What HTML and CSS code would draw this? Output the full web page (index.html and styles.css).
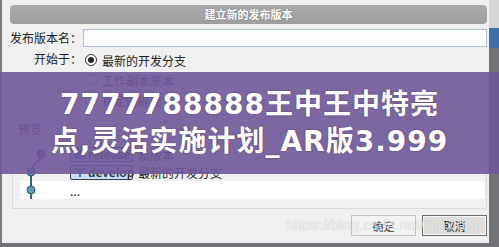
FILE: index.html
```html
<!DOCTYPE html>
<html lang="zh-CN">
<head>
  <meta charset="UTF-8" />
  <meta name="viewport" content="width=device-width, initial-scale=1" />
  <title>建立新的发布版本</title>
  <link rel="stylesheet" href="styles.css">
</head>
<body>

  <div class="dialog">
    <div class="titlebar">建立新的发布版本</div>

    <div class="form">
      <label class="lbl" for="nome">发布版本名：</label>
      <input class="name-input" type="text" id="nome" />

      <span class="lbl">开始于：</span>
      <div class="options">
        <div class="opt"><span class="radio checked"></span>最新的开发分支</div>
        <div class="opt"><span class="radio"></span>工作副本原本</div>
        <div class="opt">
          <span class="radio"></span>指定的提交
          <span class="commit-box"></span>
          <button class="pick">...</button>
        </div>
      </div>
    </div>

    <div class="preview-label">预览</div>
    <div class="group">
      <div class="commits">
        <div class="commit">
          <svg class="lane" width="48" height="18" viewBox="0 0 48 18">
            <path d="M21 9 L21 13 L16 18" stroke="#7b3c9c" stroke-width="2" fill="none" />
            <circle cx="21" cy="9" r="4" fill="#7b3c9c" stroke="#4e2266" stroke-width="1" />
          </svg>
          <span class="tag"><span class="tag-icon"></span>release</span>
          <span class="msg">新版本</span>
        </div>
        <div class="commit">
          <svg class="lane" width="48" height="18" viewBox="0 0 48 18">
            <path d="M16 0 L12 5" stroke="#7b3c9c" stroke-width="2" fill="none" />
            <path d="M11 9 L11 18" stroke="#2a6478" stroke-width="2" fill="none" />
            <circle cx="11" cy="9" r="4" fill="#5a8fc0" stroke="#2c4f70" stroke-width="1" />
          </svg>
          <span class="tag">
            <svg class="tag-icon" width="12" height="10" viewBox="0 0 12 10">
              <path d="M0 1 H12 L7 6 V10 H5 V6 Z" fill="#3b78c8" />
              <path d="M2 3 H10" stroke="#9cc4ee" stroke-width="1" />
            </svg>develop</span>
          <span class="msg">最新的开发分支</span>
        </div>
        <div class="commit white">
          <svg class="lane" width="48" height="18" viewBox="0 0 48 18">
            <path d="M11 0 L11 18" stroke="#2a6478" stroke-width="2" fill="none" />
            <circle cx="11" cy="9" r="4" fill="#5f9fb5" stroke="#2a5a6a" stroke-width="1" />
          </svg>
          <span class="dots">...</span>
        </div>
      </div>
    </div>

    <div class="actions">
      <button class="btn">确定</button>
      <button class="btn default">取消</button>
    </div>
  </div>

  <!-- faixa por cima do dialogo -->
  <div class="banner">
    <div>7777788888王中王中特亮</div>
    <div>点,灵活实施计划_AR版3.999</div>
  </div>

  <div class="watermark">https://blog.csdn.net/Xinxiang</div>

</body>
</html>
```

FILE: styles.css
```css
body {
  margin: 0;
  width: 499px;
  height: 247px;
  overflow: hidden;
  position: relative;
  font-family: "Noto Sans CJK SC", sans-serif;
  font-size: 12px;
  color: #222;
  background: linear-gradient(to bottom, #d6d6d6 0, #d6d6d6 28px, #3d6fa8 28px, #3d6fa8 48px, #707276 48px);
}

.dialog {
  width: 487px;
  height: 243px;
  box-sizing: border-box;
  padding: 5px 2px 0 8px;
  border-left: 2px solid #7d7d7d;
  background-color: #f0f0f0;
  width: 489px;
}

.titlebar {
  height: 19px;
  line-height: 19px;
  border-radius: 4px;
  background: linear-gradient(#ababab, #9e9e9e);
  color: white;
  font-size: 11px;
  font-weight: bold;
  text-align: center;
  text-shadow: 0 0 2px rgba(0,0,0,0.3);
}

.form {
  display: grid;
  grid-template-columns: 72px 1fr;
  column-gap: 1px;
  row-gap: 3px;
  margin-top: 5px;
}
.lbl {
  text-align: right;
  line-height: 18px;
  white-space: nowrap;
}
.form .lbl:nth-of-type(2) {
  line-height: 20px;
}
.name-input {
  height: 18px;
  box-sizing: border-box;
  margin: 0;
  border: 1px solid #a9c0d6;
  background-color: #fbfdff;
}

.opt {
  display: flex;
  align-items: center;
  height: 20px;
  padding-left: 2px;
  white-space: nowrap;
}
.radio {
  width: 12px;
  height: 12px;
  box-sizing: border-box;
  border-radius: 50%;
  border: 1px solid #8a8a8a;
  background-color: white;
  margin-right: 5px;
  position: relative;
}
.radio.checked {
  border-color: #333;
}
.radio.checked::after {
  content: "";
  position: absolute;
  left: 2px;
  top: 2px;
  width: 6px;
  height: 6px;
  border-radius: 50%;
  background-color: #222;
}
.commit-box {
  width: 120px;
  height: 16px;
  margin-left: 84px;
  border: 1px solid #c8c8c8;
  background-color: #f4f4f4;
}
.pick {
  height: 17px;
  width: 34px;
  margin-left: 2px;
  padding: 0;
  font-size: 11px;
  border: 1px solid #b5b5b5;
  background-color: #e8e8e8;
  color: #888;
}

.preview-label {
  margin-top: 12px;
  padding-left: 8px;
  line-height: 14px;
}

.group {
  margin: 1px 0 0 2px;
  height: 72px;
  box-sizing: border-box;
  border: 1px solid #dadada;
  padding: 3px 2px 0 7px;
}
.commits {
  padding-top: 4px;
}
.commit {
  display: flex;
  align-items: center;
  height: 18px;
  white-space: nowrap;
}
.commit.white {
  background-color: white;
}
.lane {
  display: block;
  flex: none;
}
.tag {
  display: flex;
  align-items: center;
  height: 15px;
  width: 63px;
  box-sizing: border-box;
  margin-left: 2px;
  padding-left: 3px;
  border: 1px solid #3a3a4a;
  border-radius: 2px;
  background-color: #c5def5;
  font-family: "Noto Sans", sans-serif;
  font-weight: 600;
  font-size: 12px;
  color: #333;
}
.tag-icon {
  display: block;
  margin-right: 2px;
  flex: none;
}
span.tag-icon {
  width: 12px;
  height: 10px;
  background-color: #3b78c8;
}
.msg {
  margin-left: 5px;
}
.dots {
  margin-left: 2px;
}

.actions {
  display: flex;
  justify-content: flex-end;
  gap: 6px;
  margin-top: 6px;
}
.btn {
  width: 65px;
  height: 21px;
  padding: 0;
  font-family: "Noto Sans CJK SC", sans-serif;
  font-size: 11px;
  color: #333;
  border: 1px solid #c2c2c2;
  background-color: #f3f3f3;
}
.btn.default {
  border: 1px solid #6c6c6c;
  background-color: #dedede;
  box-shadow: inset 0 0 0 1px #f6f6f6;
  color: #111;
}

/* faixa roxa com o texto grande */
.banner {
  position: absolute;
  left: 0;
  top: 72px;
  width: 499px;
  height: 102px;
  box-sizing: border-box;
  padding-top: 14px;
  background-color: rgba(112, 88, 153, 0.9);
  color: white;
  font-family: "DejaVu Sans", "Noto Sans CJK SC", sans-serif;
  font-weight: bold;
  font-size: 28px;
  line-height: 37px;
  letter-spacing: 1px;
  text-align: center;
  white-space: nowrap;
  text-shadow: 0 0 2px rgba(0,0,0,0.35);
}

.watermark {
  position: absolute;
  left: 286px;
  top: 216px;
  font-family: "Liberation Sans", sans-serif;
  font-size: 15px;
  color: rgba(255,255,255,0.75);
  text-shadow: 0 0 1px rgba(0,0,0,0.25);
  white-space: nowrap;
}
```
